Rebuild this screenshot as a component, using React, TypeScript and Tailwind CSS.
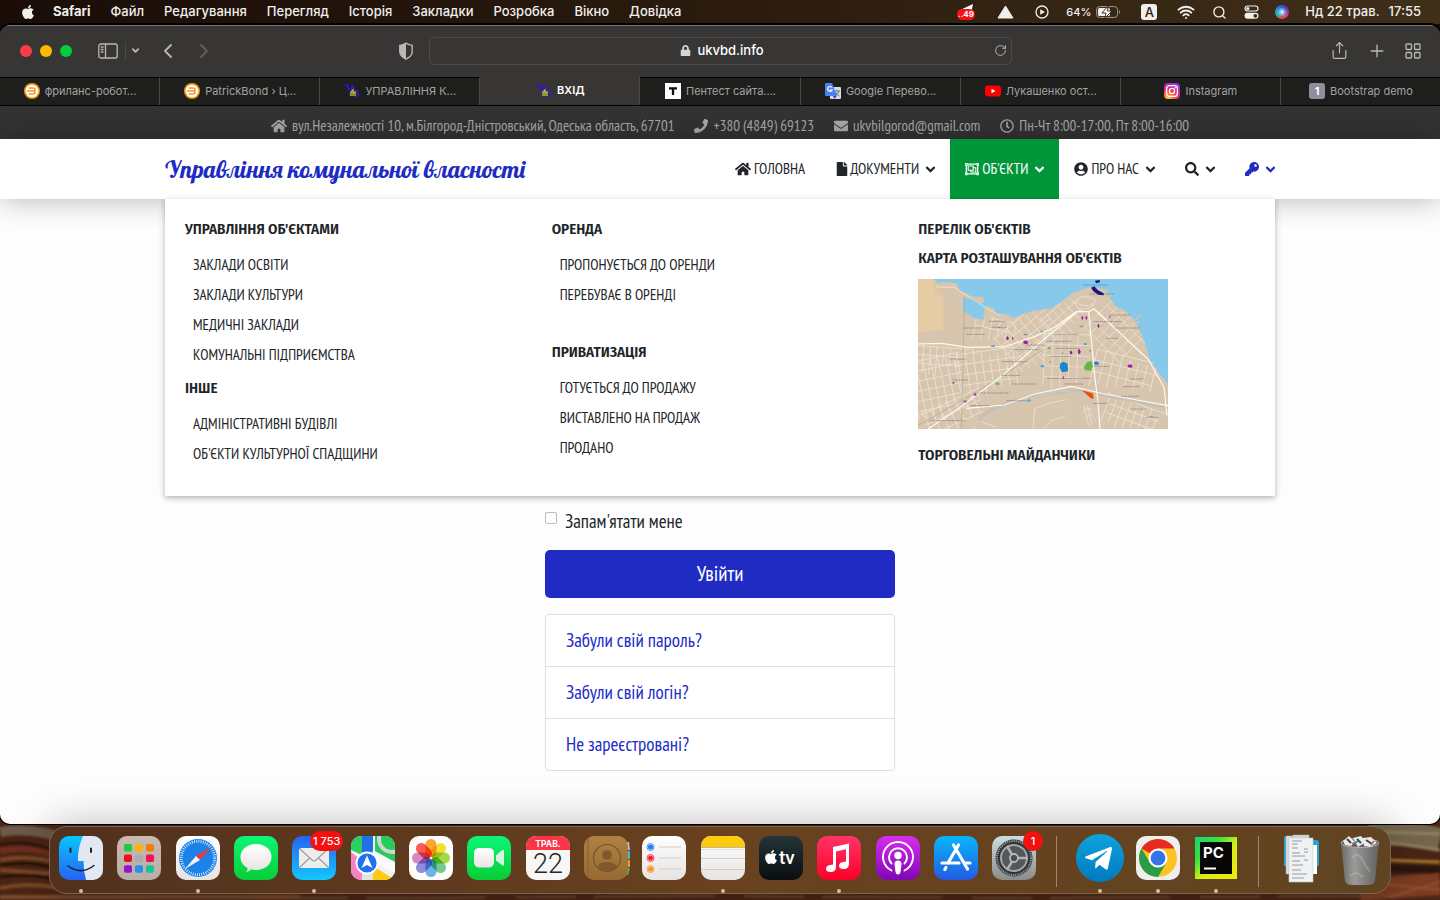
import type { ReactNode } from "react";
import {
  FaApple, FaHome, FaPhone, FaEnvelope, FaRegClock, FaFile, FaRegObjectGroup,
  FaUserCircle, FaSearch, FaKey, FaLock, FaTelegramPlane, FaAngleDown,
} from "react-icons/fa";
import {
  ChevronDown, ChevronLeft, ChevronRight, Plus, RotateCw, Search, Share, Wifi,
} from "lucide-react";

const UI = "font-['Inter','Liberation_Sans',sans-serif]";
const SITE = "font-['PT_Sans_Narrow','Fira_Sans_Condensed','Roboto_Condensed','Liberation_Sans',sans-serif]";
const HEAD = "font-['Fira_Sans_Condensed','Roboto_Condensed','Liberation_Sans',sans-serif]";

/* ---------- menu bar ---------- */

const menus = ["Файл", "Редагування", "Перегляд", "Історія", "Закладки", "Розробка", "Вікно", "Довідка"];

function MenuBar() {
  return (
    <header className="flex h-6 shrink-0 items-center justify-between bg-linear-to-r from-[#1a0d08] via-[#2a1b0e] to-[#40301a] pr-[19px] pl-5 text-[13px] font-medium text-[#f1eeec]">
      <nav className="flex items-center gap-5">
        <FaApple size={16} aria-label="Apple" className="-mr-[3px]" />
        <button className="font-bold">Safari</button>
        {menus.map((m) => <button key={m}>{m}</button>)}
      </nav>
      <div className="flex items-center">
        <span className="relative mr-[22px] h-4 w-[18px]">
          <svg viewBox="0 0 18 16" className="size-full overflow-visible">
            <path d="M1 7L16 0L14 10Z" fill="#fff" />
            <rect x="0" y="5" width="18" height="11" rx="5.500" fill="#f5101a" />
            <text x="9" y="13" textAnchor="middle" fontSize="8" fontWeight="700" fill="#fff">..49</text>
          </svg>
        </span>
        <svg viewBox="0 0 17 14" className="mr-[21px] h-3.5 w-[17px]"><path d="M8.500 1L16 13H1Z" fill="#f1eeec" stroke="#f1eeec" strokeLinejoin="round" /></svg>
        <svg viewBox="0 0 14 14" className="mr-[17px] size-3.5"><circle cx="7" cy="7" r="6" fill="none" stroke="#f1eeec" strokeWidth="1.300" /><path d="M5.200 4.200L10 7L5.200 9.800Z" fill="#f1eeec" /></svg>
        <span className="mr-[5px] text-[11px]">64%</span>
        <svg viewBox="0 0 25 12" className="mr-5 h-3 w-[25px]">
          <rect x=".6" y=".6" width="21" height="10.800" rx="3" fill="none" stroke="#a39a91" />
          <rect x="2" y="2" width="12" height="8" rx="1.500" fill="#f1eeec" />
          <path d="M23 4Q25 6 23 8Z" fill="#a39a91" />
          <path d="M12 0L6 7H10L9 12L16 5H11.500Z" fill="#fff" stroke="#2f200f" strokeWidth=".9" />
        </svg>
        <span className="mr-5 grid h-4 w-4 place-items-center rounded-[3px] bg-[#f1eeec] text-[13px] leading-4 text-[#2f200f]">A</span>
        <Wifi size={18} strokeWidth={2.6} className="mr-[17px]" />
        <Search size={15} strokeWidth={2.2} className="mr-[17px]" />
        <svg viewBox="0 0 15 14" className="mr-4 h-3.5 w-[15px]">
          <rect x="1" y="1" width="13" height="5" rx="2.500" fill="none" stroke="#f1eeec" strokeWidth="1.200" />
          <circle cx="3.800" cy="3.500" r="1.600" fill="#f1eeec" />
          <rect x=".5" y="7.800" width="14" height="6" rx="3" fill="#f1eeec" />
          <circle cx="11.300" cy="10.800" r="1.900" fill="#3a2916" />
        </svg>
        <span className="mr-4 size-[14px] rounded-full bg-[radial-gradient(circle,#fff_0%,#7ad7f0_18%,transparent_50%),conic-gradient(#3b4bd0,#7a2fd0,#d53a8a,#e0455f,#2bb3a3,#2b8fd6,#3b4bd0)]" />
        <span className="mr-[9px]">Нд 22 трав.</span>
        <span>17:55</span>
      </div>
    </header>
  );
}

/* ---------- browser chrome ---------- */

function Toolbar() {
  return (
    <div className="grid h-[52px] grid-cols-[429px_1fr_428px] items-center border-t border-[#777] bg-[#383635] pb-0.5 text-[#b9b8b7]">
      <div className="flex items-center pl-5">
        <span className="flex gap-2">
          <button aria-label="Закрити" className="size-3 rounded-full bg-[#ff3b46]" />
          <button aria-label="Згорнути" className="size-3 rounded-full bg-[#ffb900]" />
          <button aria-label="Розгорнути" className="size-3 rounded-full bg-[#00cf3f]" />
        </span>
        <button aria-label="Бічна панель" className="ml-[26px]">
          <svg viewBox="0 0 20 16" className="h-4 w-5" fill="none" stroke="currentColor" strokeWidth="1.300">
            <rect x=".8" y="1" width="18.400" height="14" rx="2" /><path d="M7.500 1V15M2.800 4H5.500M2.800 6.500H5.500M2.800 9H5.500" />
          </svg>
        </button>
        <span className="ml-[7px] h-[18px] w-px bg-[#4b4948]" />
        <button aria-label="Групи вкладок" className="ml-1"><ChevronDown size={11} strokeWidth={4} /></button>
        <button aria-label="Назад" className="ml-[15px]"><ChevronLeft size={24} strokeWidth={1.8} /></button>
        <button aria-label="Вперед" className="ml-3 text-[#636160]"><ChevronRight size={24} strokeWidth={1.8} /></button>
        <button aria-label="Конфіденційність" className="mr-[15px] ml-auto">
          <svg viewBox="0 0 16 18" className="h-[18px] w-4">
            <path d="M8 1.200C10 2.500 12 3.200 14.200 3.400V9.500C14.200 13 11.500 15.500 8 17C4.500 15.500 1.800 13 1.800 9.500V3.400C4 3.200 6 2.500 8 1.200Z" fill="none" stroke="currentColor" strokeWidth="1.400" />
            <path d="M8 1.200V17C4.500 15.500 1.800 13 1.800 9.500V3.400C4 3.200 6 2.500 8 1.200Z" fill="currentColor" />
          </svg>
        </button>
      </div>
      <div className="flex h-7 items-center rounded-md border border-[#4c4a49] pr-1 pl-5">
        <span className="flex flex-1 items-center justify-center gap-1.5 text-[13px] font-medium text-white"><FaLock size={11} className="text-[#d6d5d5]" />ukvbd.info</span>
        <button aria-label="Оновити"><RotateCw size={13} strokeWidth={1.8} /></button>
      </div>
      <div className="flex items-center justify-end gap-[18px] pr-[19px]">
        <button aria-label="Поділитися"><Share size={19} strokeWidth={1.5} /></button>
        <button aria-label="Нова вкладка"><Plus size={20} strokeWidth={1.6} /></button>
        <button aria-label="Огляд вкладок">
          <svg viewBox="0 0 16 16" className="size-4" fill="none" stroke="currentColor" strokeWidth="1.300">
            <rect x="1" y="1" width="5.500" height="5.500" rx="1" /><rect x="9.500" y="1" width="5.500" height="5.500" rx="1" />
            <rect x="1" y="9.500" width="5.500" height="5.500" rx="1" /><rect x="9.500" y="9.500" width="5.500" height="5.500" rx="1" />
          </svg>
        </button>
      </div>
    </div>
  );
}

const Coin = () => (
  <svg viewBox="0 0 16 16" className="size-4">
    <circle cx="8" cy="8" r="8" fill="#f39a1c" /><circle cx="8" cy="8" r="6.300" fill="#fff" />
    <path d="M5.200 5H9Q11 5 11 6.500T9 8H3.500M9 8Q11 8 11 9.500T9 11H5.200" stroke="#f39a1c" strokeWidth="1.500" fill="none" strokeLinecap="round" />
  </svg>
);
const Ukv = () => (
  <svg viewBox="0 0 16 16" className="size-4">
    <path d="M1 3Q4 0 4 4Q4 7 7 6Q9 4 8 2M5 12Q8 10 9 3" stroke="#3a10d0" strokeWidth="1.700" fill="none" />
    <path d="M9 4L11 8M12 8Q15 6 14 10Q16 13 12 14Z" stroke="#3421b4" strokeWidth="1.300" fill="none" />
    <path d="M7 13V9L9 7V13M9 10L11 9V13" stroke="#c8c832" strokeWidth="1.300" fill="none" />
  </svg>
);
const LetterT = () => (
  <svg viewBox="0 0 16 16" className="size-4"><rect width="16" height="16" fill="#fff" /><path d="M4 5.300H12M8 5V12" stroke="#111" strokeWidth="2.300" /></svg>
);
const Translate = () => (
  <svg viewBox="0 0 16 16" className="size-4">
    <rect x="5" y="4" width="11" height="12" rx="1" fill="#d9dde2" />
    <path d="M9 8H15M12 6.800V8M14 8Q13 12 10 13M10.500 9Q12 12 14.500 13" stroke="#607d8b" fill="none" />
    <path d="M1 0H7L12 13H1Q0 13 0 12V1Q0 0 1 0Z" fill="#4a83ee" /><path d="M8 13H12L9 16Z" fill="#3352b8" />
    <path d="M7 4.500A2.400 2.400 0 1 0 7.200 7H5" stroke="#fff" strokeWidth="1.200" fill="none" />
  </svg>
);
const YouTube = () => (
  <svg viewBox="0 0 16 16" className="size-4"><rect y="2.500" width="16" height="11" rx="3" fill="#f00" /><path d="M6.500 5.800L10.500 8L6.500 10.200Z" fill="#fff" /></svg>
);
const Instagram = () => (
  <svg viewBox="0 0 16 16" className="size-4">
    <defs><radialGradient id="ig" cx=".25" cy="1" r="1.100"><stop offset="0" stopColor="#ffd34a" /><stop offset=".35" stopColor="#fb6a2c" /><stop offset=".6" stopColor="#e01f8c" /><stop offset="1" stopColor="#8a35e0" /></radialGradient></defs>
    <rect width="16" height="16" rx="4" fill="url(#ig)" />
    <rect x="2.600" y="2.600" width="10.800" height="10.800" rx="3" fill="none" stroke="#fff" strokeWidth="1.300" /><circle cx="8" cy="8" r="2.600" fill="none" stroke="#fff" strokeWidth="1.300" /><circle cx="11.200" cy="4.800" r=".8" fill="#fff" />
  </svg>
);
const One = () => <span className="grid size-4 place-items-center rounded-[3px] bg-[#8e8e9c] text-[11px] leading-4 font-bold text-white">1</span>;

const tabs: { icon: ReactNode; label: string; active?: boolean }[] = [
  { icon: <Coin />, label: "фриланс-робот..." },
  { icon: <Coin />, label: "PatrickBond › Ц..." },
  { icon: <Ukv />, label: "УПРАВЛІННЯ К..." },
  { icon: <Ukv />, label: "ВХІД", active: true },
  { icon: <LetterT />, label: "Пентест сайта...." },
  { icon: <Translate />, label: "Google Перево..." },
  { icon: <YouTube />, label: "Лукашенко ост..." },
  { icon: <Instagram />, label: "Instagram" },
  { icon: <One />, label: "Bootstrap demo" },
];

function TabBar() {
  return (
    <div className="flex h-[29px] border-b border-black">
      {tabs.map((t, i) => (
        <button
          key={i}
          className={
            "flex flex-1 items-center justify-center gap-[5px] border-r border-r-[#4a4948] pb-px pl-px text-[11px] whitespace-nowrap last:border-r-0 " +
            (t.active ? "bg-[#383635] font-semibold text-white" : "border-t border-t-black bg-[#1e1e1d] text-[#a3a2a1]")
          }
        >
          {t.icon}
          <span>{t.label}</span>
        </button>
      ))}
    </div>
  );
}

/* ---------- web page ---------- */

function ContactBar() {
  return (
    <div className="flex h-[33px] items-center justify-center gap-5 bg-[#333] pt-[7px] pl-5 text-[15px] whitespace-nowrap text-[#aaa]">
      <span className="flex items-center gap-[5px]"><FaHome size={16} />вул.Незалежності 10, м.Білгород-Дністровський, Одеська область, 67701</span>
      <span className="flex items-center gap-[5px]"><FaPhone size={14} />+380 (4849) 69123</span>
      <span className="flex items-center gap-[5px]"><FaEnvelope size={14} />ukvbilgorod@gmail.com</span>
      <span className="flex items-center gap-[5px]"><FaRegClock size={14} />Пн-Чт 8:00-17:00, Пт 8:00-16:00</span>
    </div>
  );
}

function NavItem({ icon, label, arrow = true, className = "" }: { icon: ReactNode; label?: string; arrow?: boolean; className?: string }) {
  return (
    <li className="flex">
      <a href="#" aria-label={label ? undefined : "Меню"} className={"flex items-center px-[15px] " + className}>
        {icon}
        {label && <span className="ml-[3px]">{label}</span>}
        {arrow && <FaAngleDown size={15} className="-mr-[3px] ml-1" />}
      </a>
    </li>
  );
}

function Title({ children, className = "" }: { children: ReactNode; className?: string }) {
  return <h3 className={"text-[15px] leading-6 font-semibold " + HEAD + " " + className}><a href="#">{children}</a></h3>;
}

function Links({ items }: { items: string[] }) {
  return (
    <ul className="mt-[9px] pl-2 text-[15px] leading-[30px]">
      {items.map((i) => <li key={i}><a href="#">{i}</a></li>)}
    </ul>
  );
}

function hatch(cx: number, cy: number, w: number, h: number, angle: number, step: number) {
  let d = "";
  for (let x = -w; x <= w; x += step) d += `M${x} ${-h + ((x * 7) % 13)}V${h - ((x * 5) % 17)}`;
  for (let y = -h; y <= h; y += step * 1.3) d += `M${-w + ((y * 3) % 11)} ${y}H${w - ((y * 7) % 19)}`;
  return <path key={`${cx}-${cy}`} d={d} transform={`translate(${cx} ${cy}) rotate(${angle})`} />;
}

const mapLabels = [
  [495, 18, 75], [515, 45, 75], [573, 108, 65], [527, 128, 86], [592, 147, 74], [135, 147, 60], [145, 166, 56], [405, 166, 78],
  [385, 187, 74], [212, 127, 52], [220, 145, 48], [285, 212, 78], [252, 248, 75], [564, 178, 38], [415, 208, 70], [95, 240, 50],
  [250, 289, 58], [280, 315, 78], [440, 315, 55], [388, 298, 130], [400, 232, 60], [104, 303, 46], [178, 342, 96], [158, 380, 58],
  [35, 425, 108], [266, 365, 70], [636, 300, 42], [616, 323, 50], [610, 352, 54], [640, 390, 44], [526, 373, 46], [685, 415, 36], [510, 262, 62], [325, 198, 55],
];
const mapMarks: [number, number, number, number, string][] = [
  [490, 111, 6, 11, "#9c1c9c"], [502, 111, 6, 11, "#9c1c9c"], [538, 135, 7, 11, "#a31ba3"], [479, 210, 9, 15, "#a31ba3"], [455, 215, 8, 11, "#8f2390"],
  [265, 172, 7, 12, "#8f2390"], [282, 173, 5, 9, "#8f2390"], [316, 184, 15, 11, "#a31ba3"], [629, 256, 15, 10, "#a31ba3"], [167, 343, 9, 7, "#a31ba3"],
  [135, 363, 12, 8, "#a860a8"], [102, 309, 8, 5, "#a31ba3"], [434, 291, 4, 9, "#a31ba3"], [571, 111, 7, 6, "#b35cb0"], [240, 143, 7, 5, "#e8532e"],
  [232, 310, 13, 8, "#71b558"], [366, 154, 9, 7, "#86bd6b"], [389, 203, 9, 8, "#71b558"], [484, 139, 12, 6, "#71b558"], [514, 211, 5, 9, "#71b558"],
  [455, 182, 4, 7, "#86bd6b"], [430, 220, 6, 5, "#71b558"], [395, 245, 5, 7, "#71b558"], [528, 247, 15, 11, "#1c8dcc"], [367, 258, 13, 7, "#3ba5d4"],
  [316, 164, 13, 5, "#4a8fc0"], [218, 199, 14, 5, "#5b95bd"], [498, 192, 8, 6, "#1c8dcc"], [328, 360, 11, 9, "#4fb4d8"], [693, 410, 14, 5, "#b09ac4"],
];

function CityMap() {
  return (
    <svg viewBox="0 0 750 450" role="img" aria-label="Карта розташування об'єктів" className="h-[150px] w-[250px]">
      <defs>
        <clipPath id="land"><path d="M0 20L65 18L120 25L125 40L135 60V98L165 122L205 122L225 112L290 114L345 95L400 90L430 70L465 45L515 27L560 32L595 85L645 120L680 190L725 287L750 320V450H0Z" /></clipPath>
      </defs>
      <rect width="750" height="450" fill="#86c9ea" />
      <path d="M0 0H46L60 14L72 8L98 10L118 14L124 34L143 42L160 52L196 54L198 66L188 80L228 86L232 104L262 104L285 116L345 95L400 88L430 68L465 42L495 30L515 25L560 30L575 55L595 85L615 90L645 118L665 150L680 190L695 240L725 285L750 315V450H0Z" fill="#d8c5ae" />
      <path d="M134 56L165 60L192 76L200 88L196 122L166 116L134 94Z" fill="#86c9ea" />
      <path d="M0 0H46L76 50V154L0 160Z" fill="#e6cca4" /><path d="M46 0L60 16L78 50L48 46Z" fill="#dec7a4" />
      <path d="M650 125L666 108M645 145L663 127M560 48L572 32M574 54L584 42" stroke="#d8c5ae" strokeWidth="4" />
      <g clipPath="url(#land)" fill="none" stroke="#f1e8dc" strokeWidth="2">
        {hatch(60, 320, 75, 85, -12, 23)}
        {hatch(65, 240, 70, 35, 4, 20)}
        {hatch(210, 275, 85, 60, -8, 24)}
        {hatch(330, 180, 75, 65, -40, 23)}
        {hatch(440, 240, 62, 75, 2, 25)}
        {hatch(440, 115, 55, 40, -42, 21)}
        {hatch(600, 160, 80, 65, 45, 24)}
        {hatch(620, 280, 95, 48, 14, 26)}
        {hatch(640, 410, 80, 40, 20, 22)}
        {hatch(230, 150, 60, 30, 12, 24)}
        {hatch(110, 405, 85, 40, -25, 26)}
        <path d="M345 450L350 390L395 372L445 362M375 450L400 425L445 410M165 450L180 425L235 445M470 70Q490 40 535 62Q520 95 470 70M480 90Q510 95 530 75" />
        <path d="M498 380L512 440M507 378L523 440M517 388L532 428M496 395L525 385M500 415L530 405" />
      </g>
      <g fill="none">
        <path d="M180 425Q240 360 420 342Q500 325 560 348L750 385" stroke="#c9c0b1" strokeWidth="11" />
        <path d="M170 440Q260 370 430 335Q540 340 525 440" stroke="#cec7bb" strokeWidth="6" />
        <path d="M130 450L140 50M0 440L190 330L380 210" stroke="#b9ab98" strokeWidth="2.500" />
        <path d="M0 195L70 193L150 205L260 203L345 175L410 145L475 98H512L528 90L620 175L690 240L738 325L747 410M512 98L530 290L540 370L546 450M145 388L260 378L350 345L460 322L560 345L640 360L750 380M30 450L120 390L250 292L400 162L475 100" stroke="#fffaf2" strokeWidth="3.500" />
        <path d="M55 24L110 25L150 52L210 90L250 112" stroke="#f6ecdf" strokeWidth="2" />
      </g>
      <g stroke="#6c6a70" strokeWidth="2.600" strokeDasharray="5 1 3 1 7 2" opacity=".65">
        {mapLabels.map(([x, y, w], i) => <path key={i} d={`M${x} ${y}H${x + w}`} />)}
      </g>
      {mapMarks.map(([x, y, w, h, c], i) => <path key={i} fill={c} d={`M${x} ${y + 2}L${x + w * 0.6} ${y}L${x + w} ${y + h * 0.5}L${x + w * 0.8} ${y + h}L${x + 1} ${y + h - 1}Z`} />)}
      <path d="M427 253L437 248L449 254L450 277L432 280L425 266Z" fill="#1788cb" />
      <path d="M498 264L507 250L520 246L523 257L520 275L501 274Z" fill="#63b843" />
      <path d="M492 334L524 343L528 359L518 358Z" fill="#f04e10" />
      <path d="M531 5L545 3L546 10L534 13ZM519 26L529 22L540 34L557 43V49L541 47L526 37Z" fill="#1b1780" />
    </svg>
  );
}

function MegaMenu() {
  return (
    <div className="absolute inset-x-0 top-full z-10 grid grid-cols-3 bg-white px-[5px] pt-[18px] pb-[27px] text-[#212529] shadow-[0_2px_6px_rgba(0,0,0,0.3)]">
      <div className="px-[15px]">
        <Title>УПРАВЛІННЯ ОБ'ЄКТАМИ</Title>
        <Links items={["ЗАКЛАДИ ОСВІТИ", "ЗАКЛАДИ КУЛЬТУРИ", "МЕДИЧНІ ЗАКЛАДИ", "КОМУНАЛЬНІ ПІДПРИЄМСТВА"]} />
        <Title className="mt-1.5">ІНШЕ</Title>
        <Links items={["АДМІНІСТРАТИВНІ БУДІВЛІ", "ОБ'ЄКТИ КУЛЬТУРНОЇ СПАДЩИНИ"]} />
      </div>
      <div className="px-[15px]">
        <Title>ОРЕНДА</Title>
        <Links items={["ПРОПОНУЄТЬСЯ ДО ОРЕНДИ", "ПЕРЕБУВАЄ В ОРЕНДІ"]} />
        <Title className="mt-[30px]">ПРИВАТИЗАЦІЯ</Title>
        <Links items={["ГОТУЄТЬСЯ ДО ПРОДАЖУ", "ВИСТАВЛЕНО НА ПРОДАЖ", "ПРОДАНО"]} />
      </div>
      <div className="px-[15px]">
        <Title>ПЕРЕЛІК ОБ'ЄКТІВ</Title>
        <Title className="mt-[5px] mb-[9px]">КАРТА РОЗТАШУВАННЯ ОБ'ЄКТІВ</Title>
        <CityMap />
        <Title className="mt-[14px]">ТОРГОВЕЛЬНІ МАЙДАНЧИКИ</Title>
      </div>
    </div>
  );
}

function SiteHeader() {
  return (
    <div className="relative z-10 bg-white px-6 shadow-[0_0_30px_rgba(0,0,0,0.3)]">
      <div className="relative mx-auto flex h-[60px] max-w-[1110px] justify-between">
        <a href="#" className="self-center font-['Lobster','Liberation_Serif',serif] text-[24px] leading-8 whitespace-nowrap text-[#202bc4]">Управління комунальної власності</a>
        <ul className="-mr-[15px] flex text-[15px] whitespace-nowrap text-[#212529]">
          <NavItem icon={<FaHome size={16} />} label="ГОЛОВНА" arrow={false} />
          <NavItem icon={<FaFile size={14} className="-mr-0.5" />} label="ДОКУМЕНТИ" />
          <NavItem icon={<FaRegObjectGroup size={14} />} label="ОБ'ЄКТИ" className="bg-[#009639] text-white" />
          <NavItem icon={<FaUserCircle size={14} />} label="ПРО НАС" />
          <NavItem icon={<FaSearch size={14} />} />
          <NavItem icon={<FaKey size={14} />} className="text-[#202bc4]" />
        </ul>
        <MegaMenu />
      </div>
    </div>
  );
}

function LoginForm() {
  return (
    <main className="flex-1 bg-[#fdfdfd] pt-[310px] pb-[53px] text-[19px]">
      <form className="mx-auto w-[350px]" onSubmit={(e) => e.preventDefault()}>
        <label className="flex h-6 w-fit gap-2 leading-6 text-[#212529]">
          <input type="checkbox" className="mt-[3px] size-3 appearance-none rounded-[2px] border border-[#bbb] bg-white" />
          Запам'ятати мене
        </label>
        <button className="mt-[17px] h-12 w-full rounded-[5px] bg-[#202bc4] text-[21px] text-white">Увійти</button>
        <ul className="mt-4 divide-y divide-[#dfdfdf] rounded border border-[#dfdfdf] bg-white text-[#202bc4]">
          {["Забули свій пароль?", "Забули свій логін?", "Не зареєстровані?"].map((t) => (
            <li key={t}><a href="#" className="block px-5 py-3 leading-[27px]">{t}</a></li>
          ))}
        </ul>
      </form>
    </main>
  );
}

/* ---------- dock ---------- */

function Tile({ fill, children }: { fill: string; children?: ReactNode }) {
  return (
    <svg viewBox="0 0 44 44" className="size-11 overflow-visible">
      <defs>
        <clipPath id="tile"><rect width="44" height="44" rx="10" /></clipPath>
        <linearGradient id="g-white" x2="0" y2="1"><stop stopColor="#fff" /><stop offset="1" stopColor="#e6e4e2" /></linearGradient>
        <linearGradient id="g-green" x2="0" y2="1"><stop stopColor="#0cf678" /><stop offset="1" stopColor="#06cd35" /></linearGradient>
        <linearGradient id="g-mail" x2="0" y2="1"><stop stopColor="#2763f0" /><stop offset="1" stopColor="#14c8ff" /></linearGradient>
        <linearGradient id="g-finder" x2="0" y2="1"><stop stopColor="#08c5ff" /><stop offset="1" stopColor="#2563f4" /></linearGradient>
        <linearGradient id="g-blue" x2="0" y2="1"><stop stopColor="#08b6fa" /><stop offset="1" stopColor="#245be3" /></linearGradient>
        <linearGradient id="g-tv" x2="0" y2="1"><stop stopColor="#253539" /><stop offset="1" stopColor="#090d0f" /></linearGradient>
        <linearGradient id="g-red" x2="0" y2="1"><stop stopColor="#ff3566" /><stop offset="1" stopColor="#fb0027" /></linearGradient>
        <linearGradient id="g-purple" x2="0" y2="1"><stop stopColor="#d82df0" /><stop offset="1" stopColor="#8007b5" /></linearGradient>
        <linearGradient id="g-gold" x2="0" y2="1"><stop stopColor="#b08142" /><stop offset="1" stopColor="#966a34" /></linearGradient>
        <linearGradient id="g-gray" x2="0" y2="1"><stop stopColor="#ccdde0" /><stop offset="1" stopColor="#8c8b89" /></linearGradient>
        <linearGradient id="g-pale" x2="0" y2="1"><stop stopColor="#c9b9b2" /><stop offset="1" stopColor="#b9afa6" /></linearGradient>
      </defs>
      <g clipPath="url(#tile)"><rect width="44" height="44" fill={fill} />{children}</g>
    </svg>
  );
}

function Badge({ children }: { children: ReactNode }) {
  return <span className="absolute -top-[5px] -right-[7px] grid h-5 min-w-5 place-items-center rounded-full bg-[#f5100f] px-[3px] text-[11px] font-medium whitespace-nowrap text-white">{children}</span>;
}

const pads = ["#22c93a", "#f5b80a", "#ef7d0a", "#e3161d", "#a5adb0", "#ee1158", "#9a12c9", "#258ff5", "#1ac393"];
const petals = ["#ffa630", "#f2e236", "#a6dc45", "#76cc90", "#6cb6ea", "#938ddf", "#d48ac8", "#fb5d54"];

const apps: { icon: ReactNode; name: string; open?: boolean; badge?: string }[] = [
  { name: "Finder", open: true, icon: (
    <Tile fill="url(#g-finder)">
      <path d="M24 0Q18.500 12 19 25H24.500Q24.500 35 27 44H44V0Z" fill="#e3e9f2" />
      <path d="M11.500 12.500V16M32 12.500V16" stroke="#17202b" strokeWidth="2" strokeLinecap="round" />
      <path d="M9 30Q22 39.500 35 29.500" stroke="#17202b" strokeWidth="1.500" fill="none" strokeLinecap="round" />
    </Tile>) },
  { name: "Launchpad", icon: <Tile fill="url(#g-pale)">{pads.map((c, i) => <rect key={i} x={7 + (i % 3) * 11} y={8 + Math.floor(i / 3) * 10.6} width="8" height="7.500" rx="1.800" fill={c} />)}</Tile> },
  { name: "Safari", open: true, icon: (
    <Tile fill="url(#g-white)">
      <circle cx="22" cy="22" r="19" fill="#1b83e8" /><circle cx="22" cy="22" r="16.700" fill="none" stroke="#e8f5ff" strokeWidth="3" strokeDasharray=".8 1.386" />
      <path d="M35.500 10.500L24 24L20 20Z" fill="#f4333a" /><path d="M9 33L20 20L24 24Z" fill="#f3f3f3" />
    </Tile>) },
  { name: "Messages", icon: <Tile fill="url(#g-green)"><path d="M22 8C31 8 37.500 13.500 37.500 21S31 34 22 34C20 34 18.500 33.700 17 33.300Q15 36 12 36.200Q14 34 13.500 32C9 29.500 6.500 26 6.500 21C6.500 13.500 13 8 22 8Z" fill="url(#g-white)" /></Tile> },
  { name: "Mail", open: true, badge: "1 753", icon: (
    <Tile fill="url(#g-mail)"><rect x="7" y="12" width="30" height="20" rx="2.500" fill="#eeedeb" /><path d="M8 13L20 24Q22 25.500 24 24L36 13M8 31L17.500 22M36 31L26.500 22" fill="none" stroke="#9a9da0" strokeWidth="1.100" /></Tile>) },
  { name: "Maps", icon: (
    <Tile fill="#f2f1ee">
      <path d="M0 0H11V19L0 14Z" fill="#2ccf61" /><path d="M24 0H44V32L24 20Z" fill="#24cc5c" /><path d="M11 0H22V22H11Z" fill="#2270e8" />
      <path d="M0 16L14 27V44H0Z" fill="#f582c2" /><path d="M22 30L44 44H20Z" fill="#fdcb14" /><path d="M20 25L44 38V26L22 14Z" fill="#fafafa" />
      <circle cx="41" cy="3" r="13" fill="none" stroke="#d3d3d6" strokeWidth="4" /><path d="M11 30H22V44H11Z" fill="#e4e3e1" />
      <circle cx="16" cy="27" r="10.500" fill="#1f72f2" stroke="#fff" strokeWidth="1.800" /><path d="M16 19.500L21.500 32L16 29L10.500 32Z" fill="#fff" />
    </Tile>) },
  { name: "Photos", icon: <Tile fill="#fdfdfd">{petals.map((c, i) => <rect key={c} x="16.500" y="3" width="11" height="18" rx="5.500" fill={c} className="mix-blend-multiply" transform={`rotate(${i * 45} 22 22)`} />)}</Tile> },
  { name: "FaceTime", icon: <Tile fill="url(#g-green)"><rect x="7" y="12" width="20" height="19.500" rx="5" fill="url(#g-white)" /><path d="M29 19.500L35 14Q37 13 37 15V28.500Q37 30.500 35 29L29 24.500Z" fill="#d8f6df" /></Tile> },
  { name: "Calendar", icon: (
    <Tile fill="#f8f7f6"><path d="M0 0H44V14H0Z" fill="#fa3546" /><text x="22" y="10.500" textAnchor="middle" fontSize="8.500" fontWeight="700" fill="#fff">ТРАВ.</text><text x="22" y="36.500" textAnchor="middle" fontSize="27" fontFamily="Roboto" fontWeight="300" fill="#262626">22</text></Tile>) },
  { name: "Contacts", icon: (
    <span className="relative flex">
      <svg viewBox="0 0 44 44" className="absolute size-11 overflow-visible"><path d="M38 6H45L46 14H38Z" fill="#b9bdbd" /><path d="M38 15H46V23H38Z" fill="#45b3da" /><path d="M38 24H46V31H38Z" fill="#ef9a24" /><path d="M38 32H46L44 39H38Z" fill="#40c65a" /></svg>
      <span className="relative"><Tile fill="url(#g-gold)"><path d="M4 0V44" stroke="#84602f" /><circle cx="23" cy="22" r="13.500" fill="none" stroke="#75542a" strokeWidth="1.200" /><circle cx="23" cy="19" r="4.800" fill="#7e5a2d" /><path d="M13.500 31Q15 26 23 26T32.500 31Q29 35 23 35T13.500 31Z" fill="#7e5a2d" /></Tile></span>
    </span>) },
  { name: "Reminders", icon: <Tile fill="url(#g-white)">{["#1d7af3", "#f5212f", "#f8931d"].map((c, i) => <g key={c}><circle cx="8.500" cy={11 + i * 11} r="3.500" fill="none" stroke={c} strokeWidth=".8" /><circle cx="8.500" cy={11 + i * 11} r="2.500" fill={c} /><path d={`M17 ${11 + i * 11}H39`} stroke="#cfcdcc" strokeWidth="1.200" /></g>)}</Tile> },
  { name: "Notes", open: true, icon: <Tile fill="url(#g-white)"><path d="M0 0H44V11H0Z" fill="#fccb0e" /><path d="M0 11.500H44" stroke="#c4b98f" /><path d="M0 13.500H44" stroke="#aaa" strokeDasharray=".6 1.400" /><path d="M0 22.500H44M0 33.500H44" stroke="#cbc9c7" strokeWidth=".9" /></Tile> },
  { name: "TV", icon: <Tile fill="url(#g-tv)"><FaApple x={4} y={13} size={16} color="#fff" /><text x="20" y="28" fontSize="19" fontFamily="Roboto" fontWeight="500" fill="#fff">tv</text></Tile> },
  { name: "Music", open: true, icon: <Tile fill="url(#g-red)"><path d="M16 11L32 7.500V12.500L19 15.500V31Q19 36 13.500 36Q9 36 9 33Q9 29.500 13 29L16 28.400Z" fill="#fff" /><path d="M29 10H32V28Q32 33 26.500 33Q22 33 22 30Q22 26.500 26 26L29 25.400Z" fill="#fff" /></Tile> },
  { name: "Podcasts", icon: (
    <Tile fill="url(#g-purple)"><g fill="none" stroke="#fff" strokeWidth="1.900" strokeLinecap="round"><path d="M15.500 34.500A15 15 0 1 1 28.500 34.500" /><path d="M15.500 27.500A9 9 0 1 1 28.500 27.500" /></g><circle cx="22" cy="19.500" r="3.700" fill="#fff" /><path d="M18.500 28Q18.500 24.500 22 24.500T25.500 28L24.500 36Q24 38.500 22 38.500T19.500 36Z" fill="#fff" /></Tile>) },
  { name: "App Store", icon: <Tile fill="url(#g-blue)"><path d="M24.500 9L14 27M19.500 9L33.500 33M8 27H25M31 27H36M12 31.500L10.800 33.500" stroke="#fff" strokeWidth="3.200" strokeLinecap="round" /></Tile> },
  { name: "Settings", badge: "1", icon: (
    <Tile fill="url(#g-gray)">
      <circle cx="22" cy="22" r="18.500" fill="#303234" /><circle cx="22" cy="22" r="17" fill="none" stroke="#9a9fa1" strokeWidth="2" strokeDasharray="1.200 1" />
      <circle cx="22" cy="22" r="13" fill="#55585a" stroke="#a1a5a7" strokeWidth="2" /><path d="M22 22H36M22 22L15 10M22 22L15 34" stroke="#aeb2b4" strokeWidth="2.500" /><circle cx="22" cy="22" r="4" fill="#4a4d4f" stroke="#b4b8ba" strokeWidth="1.800" />
    </Tile>) },
];

const extra: typeof apps = [
  { name: "Telegram", open: true, icon: <span className="-m-0.5 grid size-12 place-items-center rounded-full bg-linear-to-b from-[#0fa4df] to-[#0279bd]"><FaTelegramPlane size={31} color="#fff" className="mr-0.5" /></span> },
  { name: "Chrome", open: true, icon: (
    <Tile fill="#f1efee">
      <circle cx="22" cy="22" r="19" fill="#fcc31f" /><path d="M22 22L5.550 12.500A19 19 0 0 1 38.450 12.500H22Z" fill="#e62b23" /><path d="M5.550 12.500A19 19 0 0 0 22 41L30.500 26.500L22 22L13.500 26Z" fill="#289c48" />
      <circle cx="22" cy="22" r="9.500" fill="#fff" /><circle cx="22" cy="22" r="7.400" fill="#3473e8" />
    </Tile>) },
  { name: "PyCharm", open: true, icon: (
    <svg viewBox="0 0 44 44" className="size-11">
      <defs><linearGradient id="pc" x2="1" y2="1"><stop stopColor="#16d47c" /><stop offset=".3" stopColor="#33e53c" /><stop offset=".55" stopColor="#d3ee18" /><stop offset="1" stopColor="#f3e80b" /></linearGradient></defs>
      <rect x="1" y="1" width="42" height="42" fill="url(#pc)" /><rect x="6" y="6" width="32" height="32" fill="#070707" />
      <text x="9" y="21.500" fontSize="15" fontWeight="700" fill="#fff">PC</text><path d="M10 32.500H22" stroke="#fff" strokeWidth="2" />
    </svg>) },
];

const bins: typeof apps = [
  { name: "Documents", icon: (
    <svg viewBox="0 0 44 48" className="h-12 w-11 overflow-visible">
      <path d="M4 2Q4 0 7 0H22L25 4H36Q39 4 39 7V30H4Z" fill="#27a3d4" />
      <path d="M6 0H27V38H6ZM13 -1H29V40H13Z" fill="#dcdcdf" stroke="#b8b8bc" strokeWidth=".5" /><path d="M28 9H37V38H28Z" fill="#fff" />
      <path d="M9 2H33V46H9Z" fill="#eff1f3" stroke="#c6c9cc" strokeWidth=".6" />
      <path d="M12 5H22M12 8H18M12 12H18M24 13H28M12 17H20M24 16H28M12 20H25M12 25H20M24 24H28M12 29H23M12 34H21M12 38H27M12 42H24" stroke="#8c9196" strokeWidth=".9" />
    </svg>) },
  { name: "Trash", icon: (
    <svg viewBox="0 0 44 50" className="h-[50px] w-11 overflow-visible">
      <defs><linearGradient id="bin"><stop stopColor="#6c6e70" /><stop offset=".35" stopColor="#a0a2a3" /><stop offset="1" stopColor="#606264" /></linearGradient></defs>
      <path d="M3 6H41L37 45Q36 49 30 49H14Q8 49 7 45Z" fill="url(#bin)" opacity=".92" /><ellipse cx="22" cy="7" rx="19" ry="4.500" fill="#5b5c5d" stroke="#b5b5b4" />
      <path d="M5 5L11 0L17 6L13 10L7 9ZM15 2L23 0L28 6L20 11ZM25 2L33 1L39 7L32 11L26 10Z" fill="#eceae8" /><path d="M9 3L13 7M28 4L34 8M19 3L23 7" stroke="#344a55" strokeWidth="2" /><path d="M14 8L18 6M33 9L36 5" stroke="#c55a4c" strokeWidth="1.500" /><path d="M17 6H20" stroke="#31abc4" strokeWidth="2" />
      <path d="M14 22Q20 15 25 25T32 35M12 40Q18 34 25 41" stroke="#c5c7c8" strokeWidth="2" fill="none" opacity=".35" />
    </svg>) },
];

function DockGroup({ items, grow }: { items: typeof apps; grow: string }) {
  return (
    <ul className={"flex " + grow}>
      {items.map((a) => (
        <li key={a.name} className="flex flex-1 flex-col items-center">
          <button aria-label={a.name} className="relative grid h-11 w-11 place-items-center">
            {a.icon}
            {a.badge && <Badge>{a.badge}</Badge>}
          </button>
          {a.open && <span className="mt-[9px] size-1 rounded-full bg-[#dfb99f]" />}
        </li>
      ))}
    </ul>
  );
}

function Dock() {
  return (
    <footer className="shrink-0 px-[49px] pt-0.5 pb-1.5">
      <div className="flex h-[68px] rounded-[18px] border border-[#7c6350] bg-linear-to-r from-[#51311d] via-[#69411f] to-[#604421] pt-[9px] pr-px pl-0.5 shadow-[0_0_44px_rgba(0,0,0,0.28)]">
        <DockGroup items={apps} grow="flex-[17]" />
        <span className="mx-[13px] h-[51px] w-px bg-[#a08670]" />
        <DockGroup items={extra} grow="flex-[3]" />
        <span className="mx-[13px] h-[51px] w-px bg-[#a08670]" />
        <DockGroup items={bins} grow="flex-[2]" />
      </div>
    </footer>
  );
}

const Wallpaper = () => (
  <svg viewBox="0 0 1440 100" preserveAspectRatio="none" className="absolute inset-x-0 bottom-0 -z-10 h-[100px] w-full">
    <defs><filter id="soft"><feGaussianBlur stdDeviation="1.200" /></filter></defs>
    <rect width="1440" height="100" fill="#4a2515" />
    <g fill="none" filter="url(#soft)">
      <path d="M0 32Q30 26 70 40" stroke="#6d5a4a" strokeWidth="10" />
      <path d="M0 45Q30 39 60 54" stroke="#2a130a" strokeWidth="3" />
      <path d="M0 51Q30 44 60 58" stroke="#6f2f1a" strokeWidth="6" />
      <path d="M0 60Q30 54 60 64M0 70L60 74M0 88Q30 82 60 88" stroke="#7c4726" strokeWidth="4" />
      <path d="M0 65Q30 60 60 69M0 77Q30 72 60 80" stroke="#1e0d06" strokeWidth="2.500" />
      <path d="M0 97H300" stroke="#7d4b2a" strokeWidth="4" />
      <path d="M60 97L400 98L700 96L1000 98L1400 96" stroke="#6b4a31" strokeWidth="2" strokeDasharray="60 18 120 30" />
      <path d="M1370 36Q1400 30 1440 40" stroke="#75664e" strokeWidth="24" />
      <path d="M1385 42L1440 50M1380 32L1440 34" stroke="#8f805f" strokeWidth="3" />
      <path d="M1385 60L1440 62" stroke="#a37a2c" strokeWidth="3" />
      <path d="M1385 68L1440 70" stroke="#2c150b" strokeWidth="8" />
      <path d="M1360 90L1440 84" stroke="#7b3c22" strokeWidth="22" />
      <path d="M1385 84L1440 90M1390 97L1440 82" stroke="#935030" strokeWidth="2" />
    </g>
  </svg>
);

export default function App() {
  return (
    <div className={"relative isolate flex min-h-screen flex-col overflow-hidden bg-[#1a0d08] " + UI}>
      <Wallpaper />
      <MenuBar />
      <div className="flex flex-1 flex-col overflow-hidden rounded-[10px] border-t border-black shadow-[0_0_0_1px_#000]">
        <Toolbar />
        <TabBar />
        <div className={"flex flex-1 flex-col " + SITE}>
          <ContactBar />
          <SiteHeader />
          <LoginForm />
        </div>
      </div>
      <Dock />
    </div>
  );
}
